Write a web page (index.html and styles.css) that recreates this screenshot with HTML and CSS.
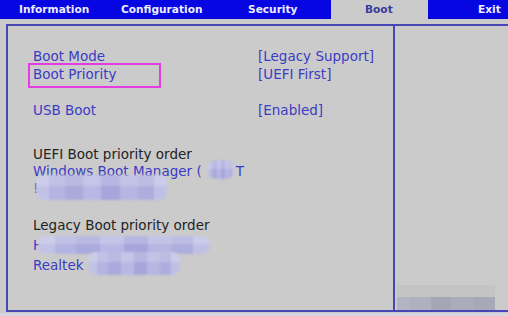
FILE: index.html
```html
<!DOCTYPE html>
<html>
<head>
<meta charset="utf-8">
<link rel="stylesheet" href="styles.css">
</head>
<body>
<div class="screen">
  <div class="tabs">
    <div class="tab t-info">Information</div>
    <div class="tab t-conf">Configuration</div>
    <div class="tab t-sec">Security</div>
    <div class="tab t-boot active">Boot</div>
    <div class="tab t-exit">Exit</div>
  </div>
  <div class="frame">
    <div class="pane-left">
      <div class="row"><span class="lbl">Boot Mode</span><span class="val">[Legacy Support]</span></div>
      <div class="row"><span class="lbl sel">Boot Priority</span><span class="val">[UEFI First]</span></div>
      <div class="row gap"><span class="lbl">USB Boot</span><span class="val">[Enabled]</span></div>
      <div class="group g-uefi">
        <div class="title">UEFI Boot priority order</div>
        <div class="item">Windows Boot Manager (<span class="spacer"></span>T<span class="blob b1"></span></div>
        <div class="item">!<span class="blob b2"></span></div>
      </div>
      <div class="group g-legacy">
        <div class="title">Legacy Boot priority order</div>
        <div class="item">H<span class="blob b3"></span></div>
        <div class="item">Realtek<span class="blob b4"></span></div>
      </div>
    </div>
    <div class="pane-right">
      <div class="help-blob"></div>
    </div>
  </div>
</div>
</body>
</html>
```
FILE: styles.css
```css
html, body {
  margin: 0;
  padding: 0;
}
body {
  width: 508px;
  height: 316px;
  overflow: hidden;
  background: #d6d6e2;
  font-family: "DejaVu Sans", Verdana, sans-serif;
}
.screen {
  width: 508px;
  height: 313px;
  background: #cbcbcb;
  overflow: hidden;
}
.tabs {
  display: flex;
  height: 19px;
  background: #0606e2;
  font-size: 10.6px;
  font-weight: bold;
  line-height: 19px;
  color: #ececff;
}
.tab {
  box-sizing: border-box;
  white-space: nowrap;
}
.t-info { width: 105px; padding-left: 19px; }
.t-conf { width: 120px; padding-left: 16px; }
.t-sec { width: 106px; padding-left: 23px; }
.t-boot { width: 97px; padding-left: 34px; }
.t-exit { width: 80px; padding-left: 50px; }
.tab.active {
  background: #cbcbcb;
  color: #3b3b9e;
}
.frame {
  margin-top: 5px;
  margin-left: 6px;
  width: 520px;
  height: 288px;
  box-sizing: border-box;
  border: 2px solid #4646b4;
  display: grid;
  grid-template-columns: 387px 1fr;
}
.pane-left {
  border-right: 2px solid #4646b4;
  padding: 21px 0 0 25px;
  font-size: 13.5px;
  color: #3b3bc4;
}
.row {
  display: flex;
  line-height: 18px;
  height: 18px;
}
.row.gap {
  margin-top: 18px;
}
.lbl {
  width: 225px;
  position: relative;
  white-space: nowrap;
}
.val {
  white-space: nowrap;
}
.sel::after {
  content: "";
  position: absolute;
  left: -5px;
  top: -2px;
  width: 133px;
  height: 25px;
  box-sizing: border-box;
  border: 2px solid #e23ce2;
}
.group .title {
  color: #232323;
  white-space: nowrap;
}
.item {
  position: relative;
  white-space: nowrap;
}
.g-uefi {
  margin-top: 27px;
  line-height: 17px;
}
.g-legacy {
  margin-top: 18px;
  line-height: 20px;
}
.spacer {
  display: inline-block;
  width: 34px;
}
.blob {
  position: absolute;
  border-radius: 8px;
  filter: blur(1.2px);
  background:
    linear-gradient(180deg, rgba(255,255,255,0.18) 0 45%, rgba(255,255,255,0) 45%),
    linear-gradient(90deg, #c2c2e6 0 10%, #b4b4e2 10% 22%, #aaaadc 22% 36%, #b8b8e4 36% 50%, #a6a6dc 50% 64%, #b6b6e2 64% 78%, #aeaede 78% 90%, #c0c0e6 90%);
}
.b1 {
  left: 174px;
  top: -3px;
  width: 28px;
  height: 19px;
  border-radius: 10px;
}
.b2 {
  left: 3px;
  top: -5px;
  width: 131px;
  height: 25px;
}
.b3 {
  left: 5px;
  top: 1px;
  width: 172px;
  height: 18px;
}
.b4 {
  left: 55px;
  top: -3px;
  width: 92px;
  height: 23px;
}
.pane-right {
  display: flex;
  flex-direction: column;
  justify-content: flex-end;
}
.help-blob {
  margin-left: 2px;
  width: 98px;
  height: 25px;
  background:
    linear-gradient(180deg, #c4c4c4 0 48%, rgba(0,0,0,0) 48%),
    linear-gradient(90deg, #b4b4c4 0 12%, #b0b0c0 12% 35%, #a6a6b6 35% 55%, #acacbc 55% 78%, #a8a8b8 78%);
}
```
